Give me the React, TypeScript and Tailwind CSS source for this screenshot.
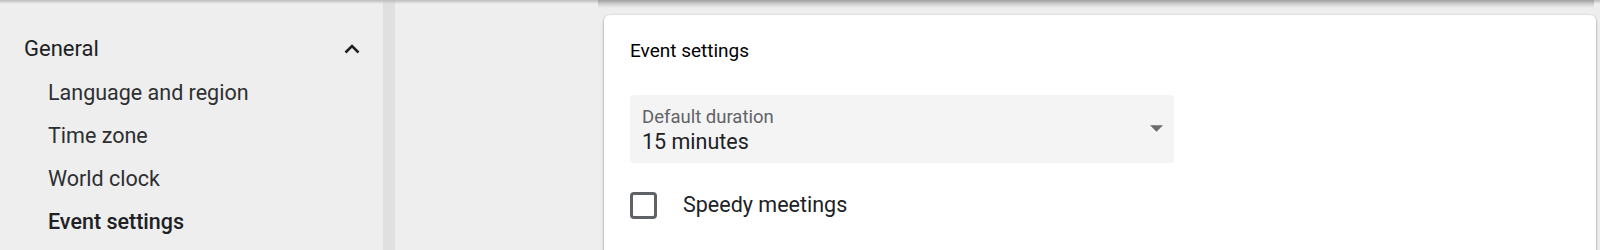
const subItems = ["Language and region", "Time zone", "World clock", "Event settings"];

export default function App() {
  return (
    <div className="relative flex h-[250px] w-full overflow-hidden bg-[#eeeeee] font-['Roboto',sans-serif] text-[#202124]">
      {/* header shadow */}
      <div className="pointer-events-none absolute inset-x-0 top-0 h-[4px] bg-gradient-to-b from-[#bdbdbd] to-transparent" />
      <div className="pointer-events-none absolute left-[598px] right-[6px] top-0 z-10 h-[8px] bg-gradient-to-b from-[#9e9e9e] via-[#d0d0d0] to-transparent" />

      {/* Sidebar */}
      <aside className="w-[383px] shrink-0 pt-[35px]">
        <div className="flex h-[28px] items-center justify-between pl-[24px] pr-[23px]">
          <span className="text-[22px] leading-[28px]">General</span>
          <svg width="16" height="10" viewBox="0 0 16 10" fill="none">
            <path d="M1.5 8.5L8 2l6.5 6.5" stroke="#202124" strokeWidth="2.6" />
          </svg>
        </div>
        <ul className="mt-[16px] flex flex-col gap-[15px] pl-[48px]">
          {subItems.map((item, i) => (
            <li
              key={item}
              className={`h-[28px] text-[21.5px] leading-[28px] ${i === 3 ? "font-medium" : "text-[#2d2f31]"}`}
            >
              {item}
            </li>
          ))}
        </ul>
      </aside>

      {/* scroll strip */}
      <div className="w-[12px] shrink-0 bg-[#e0e0e0]" />

      {/* Main */}
      <main className="flex-1 pl-[209px] pr-[4px] pt-[15px]">
        <section className="h-[260px] rounded-[6px] bg-white px-[26px] pt-[23px] shadow-[0_1px_3px_rgba(0,0,0,0.3),0_1px_2px_rgba(0,0,0,0.15)]">
          <h2 className="text-[19px] leading-[26px] text-black">Event settings</h2>
          <div className="mt-[31px] flex h-[68px] w-[544px] items-center justify-between rounded-[4px] bg-[#f4f4f4] pl-[12px] pr-[11px]">
            <div className="flex flex-col pt-[3px]">
              <span className="text-[18.5px] leading-[22px] text-[#5f6368]">Default duration</span>
              <span className="text-[21.5px] leading-[28px]">15 minutes</span>
            </div>
            <svg width="13" height="7" viewBox="0 0 10 5" className="mb-[2px]">
              <path d="M0 0l5 5 5-5z" fill="#6b6b6b" />
            </svg>
          </div>
          <label className="mt-[28px] flex items-center gap-[26px]">
            <span className="h-[27px] w-[27px] rounded-[4px] border-[3px] border-[#5f6368]" />
            <span className="text-[21.5px] leading-[28px]">Speedy meetings</span>
          </label>
        </section>
      </main>
    </div>
  );
}
